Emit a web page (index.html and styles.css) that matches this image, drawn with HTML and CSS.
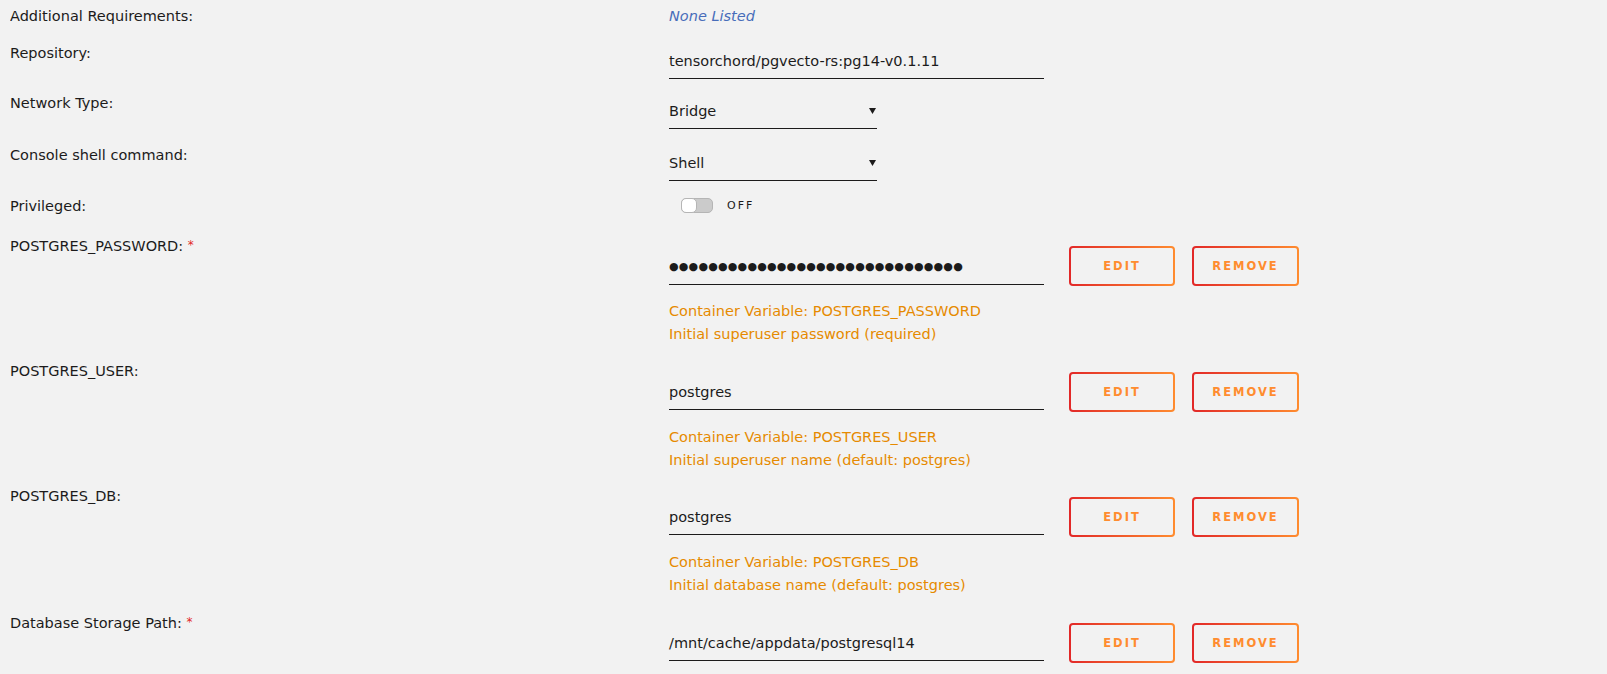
FILE: index.html
```html
<!DOCTYPE html>
<html lang="en">
<head>
<meta charset="utf-8">
<title>Docker template</title>
<link rel="stylesheet" href="styles.css">
</head>
<body>
<div class="form">
  <div class="row h37">
    <div class="label">Additional Requirements:</div>
    <div class="value"><span class="none">None Listed</span></div>
  </div>
  <div class="row h50">
    <div class="label">Repository:</div>
    <div class="value"><div class="field">tensorchord/pgvecto-rs:pg14-v0.1.11</div></div>
  </div>
  <div class="row h52">
    <div class="label">Network Type:</div>
    <div class="value"><div class="field select"><span>Bridge</span><svg class="caret" width="7" height="6" viewBox="0 0 7 6"><polygon points="0,0 7,0 3.5,6" fill="#1c1b1b"/></svg></div></div>
  </div>
  <div class="row h51">
    <div class="label">Console shell command:</div>
    <div class="value"><div class="field select"><span>Shell</span><svg class="caret" width="7" height="6" viewBox="0 0 7 6"><polygon points="0,0 7,0 3.5,6" fill="#1c1b1b"/></svg></div></div>
  </div>
  <div class="row h39">
    <div class="label">Privileged:</div>
    <div class="value"><div class="toggle-wrap"><div class="switch"><div class="knob"></div></div><span class="off">OFF</span></div></div>
  </div>

  <div class="row env h126">
    <div class="label">POSTGRES_PASSWORD: <span class="req">*</span></div>
    <div class="value">
      <div class="line">
        <div class="field"><span class="dots">●●●●●●●●●●●●●●●●●●●●●●●●●●●●●●</span></div>
        <button class="btn edit">Edit</button>
        <button class="btn">Remove</button>
      </div>
      <div class="notes">Container Variable: POSTGRES_PASSWORD<br>Initial superuser password (required)</div>
    </div>
  </div>

  <div class="row env h125">
    <div class="label">POSTGRES_USER:</div>
    <div class="value">
      <div class="line">
        <div class="field">postgres</div>
        <button class="btn edit">Edit</button>
        <button class="btn">Remove</button>
      </div>
      <div class="notes">Container Variable: POSTGRES_USER<br>Initial superuser name (default: postgres)</div>
    </div>
  </div>

  <div class="row env h126">
    <div class="label">POSTGRES_DB:</div>
    <div class="value">
      <div class="line">
        <div class="field">postgres</div>
        <button class="btn edit">Edit</button>
        <button class="btn">Remove</button>
      </div>
      <div class="notes">Container Variable: POSTGRES_DB<br>Initial database name (default: postgres)</div>
    </div>
  </div>

  <div class="row env last">
    <div class="label">Database Storage Path: <span class="req">*</span></div>
    <div class="value">
      <div class="line">
        <div class="field">/mnt/cache/appdata/postgresql14</div>
        <button class="btn edit">Edit</button>
        <button class="btn">Remove</button>
      </div>
    </div>
  </div>
</div>
</body>
</html>
```
FILE: styles.css
```css
html, body {
  margin: 0;
  height: 100%;
  overflow: hidden;
  background: #f2f2f2;
}
body {
  font-family: "DejaVu Sans", sans-serif;
  font-size: 14.5px;
  color: #1c1b1b;
}
.form {
  padding: 6px 0 0 10px;
}
.row {
  display: flex;
  align-items: flex-start;
  overflow: hidden;
}
.h37 { height: 37px; }
.h50 { height: 50px; }
.h52 { height: 52px; }
.h51 { height: 51px; }
.h39 { height: 39px; }
.h125 { height: 125px; }
.h126 { height: 126px; }

.label {
  flex: none;
  width: 659px;
  line-height: 20px;
}
.req {
  color: #e22828;
  font-size: 12px;
  vertical-align: 2px;
}
.value {
  flex: none;
  line-height: 20px;
}
.none {
  font-style: italic;
  color: #486dba;
}
.field {
  width: 375px;
  padding: 8px 0 7px;
  line-height: 20px;
  border-bottom: 1px solid #1c1b1b;
  white-space: nowrap;
}
.field.select {
  width: 208px;
  display: flex;
  justify-content: space-between;
  align-items: center;
}
.caret {
  margin-right: 1px;
  display: block;
}
.dots {
  font-size: 11px;
  letter-spacing: 0.2px;
}
.toggle-wrap {
  display: flex;
  align-items: center;
  height: 18px;
  padding-left: 12px;
}
.switch {
  width: 32px;
  height: 15px;
  box-sizing: border-box;
  border: 1px solid #b5b5b5;
  border-radius: 5px;
  background: #cbcbcb;
  display: flex;
}
.knob {
  width: 16px;
  height: 15px;
  box-sizing: border-box;
  margin: -1px 0 0 -1px;
  background: #fff;
  border: 1px solid #b5b5b5;
  border-radius: 5px;
}
.off {
  margin-left: 14px;
  font-size: 11px;
  line-height: 13px;
  letter-spacing: 2px;
}
.env .value {
  margin-top: 11px;
}
.line {
  display: flex;
  align-items: center;
  height: 40px;
}
.btn {
  box-sizing: border-box;
  height: 40px;
  width: 107px;
  margin: 0 0 0 17px;
  padding: 0;
  border: 2px solid transparent;
  border-radius: 4px;
  background: linear-gradient(#f2f2f2, #f2f2f2) padding-box,
              linear-gradient(90deg, #e22828, #ff8c2f) border-box;
  color: #ff8c2f;
  font-family: "DejaVu Sans", sans-serif;
  font-weight: bold;
  font-size: 11.5px;
  letter-spacing: 2px;
  text-transform: uppercase;
}
.btn.edit {
  margin-left: 25px;
  width: 106px;
}
.notes {
  margin-top: 14px;
  color: #e68a00;
  line-height: 23px;
  white-space: nowrap;
}
```
